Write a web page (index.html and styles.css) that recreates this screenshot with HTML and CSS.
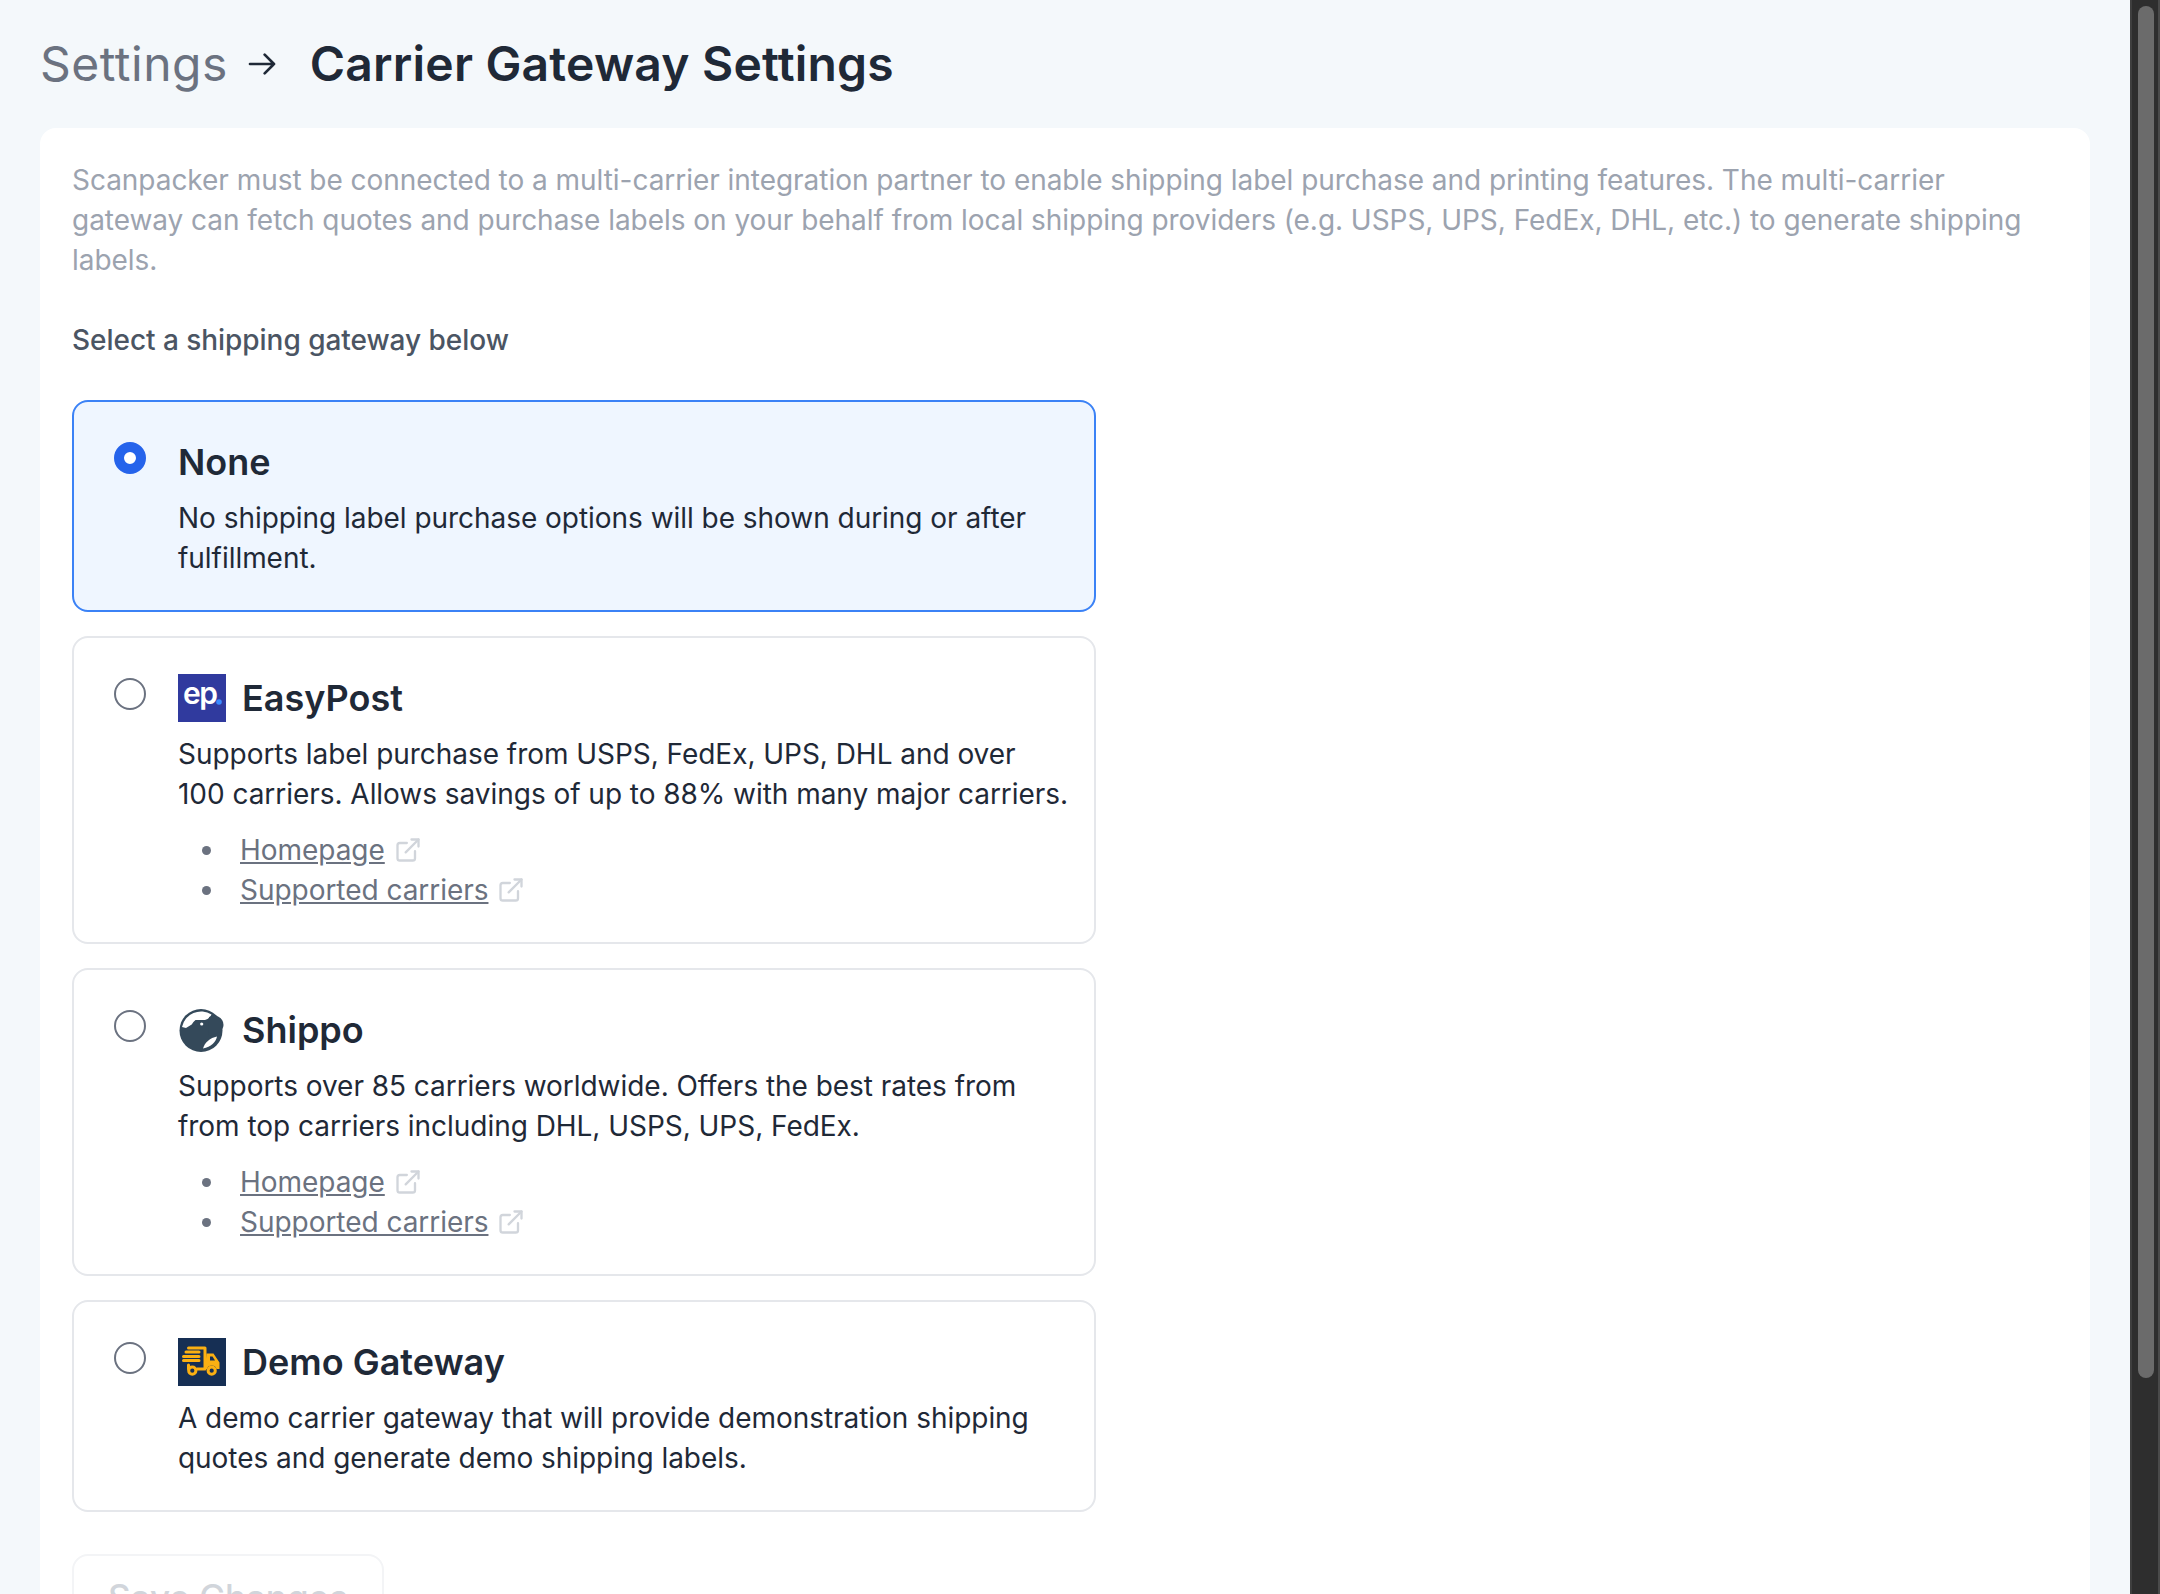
FILE: index.html
```html
<!DOCTYPE html>
<html>
<head>
	<title>Carrier Gateway Settings</title>
	<meta charset="UTF-8">
	<link rel="stylesheet" href="styles.css">
</head>
<body>
	<div class="page">
		<main class="content">
			<h1 class="title">
				<span class="crumb">Settings</span>
				<svg class="arrow" viewBox="0 0 24 24" fill="none" stroke="currentColor" stroke-width="2" stroke-linecap="round" stroke-linejoin="round"><path d="M14 5l7 7m0 0l-7 7m7-7H3"/></svg>
				<span class="current">Carrier Gateway Settings</span>
			</h1>
			<section class="panel">
				<p class="intro">Scanpacker must be connected to a multi-carrier integration partner to enable shipping label purchase and printing features. The multi-carrier gateway can fetch quotes and purchase labels on your behalf from local shipping providers (e.g. USPS, UPS, FedEx, DHL, etc.) to generate shipping labels.</p>
				<p class="select-label">Select a shipping gateway below</p>

				<div class="gateways">
					<div class="gateway selected">
						<span class="radio"></span>
						<div class="gateway-body">
							<h2 class="gateway-name">None</h2>
							<p class="gateway-text">No shipping label purchase options will be shown during or after fulfillment.</p>
						</div>
					</div>

					<div class="gateway">
						<span class="radio"></span>
						<div class="gateway-body">
							<h2 class="gateway-name">
								<svg class="logo" viewBox="0 0 48 48">
									<rect width="48" height="48" fill="#303a9e"/>
									<text x="5" y="30" class="ep-text">ep</text>
									<circle cx="41" cy="28" r="2.800" fill="#3b8bff"/>
								</svg>
								EasyPost
							</h2>
							<p class="gateway-text">Supports label purchase from USPS, FedEx, UPS, DHL and over<br>100 carriers. Allows savings of up to 88% with many major carriers.</p>
							<ul class="links">
								<li><a href="#">Homepage</a><svg class="ext" viewBox="0 0 24 24" fill="none" stroke="currentColor" stroke-width="2" stroke-linecap="round" stroke-linejoin="round"><path d="M18 13v6a2 2 0 0 1-2 2H5a2 2 0 0 1-2-2V8a2 2 0 0 1 2-2h6"/><path d="M15 3h6v6"/><path d="M10 14L21 3"/></svg></li>
								<li><a href="#">Supported carriers</a><svg class="ext" viewBox="0 0 24 24" fill="none" stroke="currentColor" stroke-width="2" stroke-linecap="round" stroke-linejoin="round"><path d="M18 13v6a2 2 0 0 1-2 2H5a2 2 0 0 1-2-2V8a2 2 0 0 1 2-2h6"/><path d="M15 3h6v6"/><path d="M10 14L21 3"/></svg></li>
							</ul>
						</div>
					</div>

					<div class="gateway">
						<span class="radio"></span>
						<div class="gateway-body">
							<h2 class="gateway-name">
								<svg class="logo" viewBox="0 0 48 48">
									<circle cx="23" cy="24.500" r="21.500" fill="#34495a"/>
									<path d="M4 21A19.500 19.500 0 0 1 33.500 8.500L32 11Q29 14 27 14L17.500 14Q15 16 13.700 18.500L8 22Z" fill="#fff"/>
									<path d="M31 11Q36 9 40 10.500Q45.500 13 45.500 19Q45.500 24 40 27L30 30Z" fill="#34495a"/>
									<circle cx="23.700" cy="18" r="1.600" fill="#fff"/>
									<path d="M25 42.500C27 36 32 32 39 30.500C38 36 33 41 25 42.500Z" fill="#fff"/>
								</svg>
								Shippo
							</h2>
							<p class="gateway-text">Supports over 85 carriers worldwide. Offers the best rates from from top carriers including DHL, USPS, UPS, FedEx.</p>
							<ul class="links">
								<li><a href="#">Homepage</a><svg class="ext" viewBox="0 0 24 24" fill="none" stroke="currentColor" stroke-width="2" stroke-linecap="round" stroke-linejoin="round"><path d="M18 13v6a2 2 0 0 1-2 2H5a2 2 0 0 1-2-2V8a2 2 0 0 1 2-2h6"/><path d="M15 3h6v6"/><path d="M10 14L21 3"/></svg></li>
								<li><a href="#">Supported carriers</a><svg class="ext" viewBox="0 0 24 24" fill="none" stroke="currentColor" stroke-width="2" stroke-linecap="round" stroke-linejoin="round"><path d="M18 13v6a2 2 0 0 1-2 2H5a2 2 0 0 1-2-2V8a2 2 0 0 1 2-2h6"/><path d="M15 3h6v6"/><path d="M10 14L21 3"/></svg></li>
							</ul>
						</div>
					</div>

					<div class="gateway">
						<span class="radio"></span>
						<div class="gateway-body">
							<h2 class="gateway-name">
								<svg class="logo" viewBox="0 0 48 48">
									<rect width="48" height="48" fill="#162f54"/>
									<g fill="none" stroke="#fbb012" stroke-width="3" stroke-linecap="round" stroke-linejoin="round">
										<path d="M10.500 10H27V31H19"/>
										<path d="M10.500 27V31"/>
										<path d="M8 14H21M5.500 18.500H21M5.500 22.500H21"/>
										<circle cx="14.300" cy="32.700" r="3.600"/>
										<circle cx="33.700" cy="32.700" r="3.600"/>
									</g>
									<path d="M28.500 15.500H35.500L41.500 24.500V31H38.500A5 5 0 0 0 29 31H27Z" fill="#fbb012"/>
									<path d="M32 18.500H34.500L37 22.500H32Z" fill="#162f54"/>
								</svg>
								Demo Gateway
							</h2>
							<p class="gateway-text">A demo carrier gateway that will provide demonstration shipping quotes and generate demo shipping labels.</p>
						</div>
					</div>
				</div>

				<button class="save" disabled>Save Changes</button>
			</section>
		</main>
		<div class="scrollbar"><div class="thumb"></div></div>
	</div>
</body>
</html>
```

FILE: styles.css
```css
* {
	box-sizing: border-box;
}
html, body {
	margin: 0;
	height: 100%;
	overflow: hidden;
}
body {
	font-family: Inter, "Liberation Sans", sans-serif;
	font-size: 28px;
	line-height: 40px;
	letter-spacing: -0.04px;
	color: #1f2937;
	background: #f4f8fb;
}
.page {
	display: flex;
	height: 1594px;
}
.content {
	flex: 1;
	min-width: 0;
	padding: 0 40px;
	overflow: hidden;
}
.title {
	display: flex;
	align-items: center;
	height: 128px;
	margin: 0;
	font-size: 48px;
	line-height: 64px;
	font-weight: 600;
	letter-spacing: 0.2px;
}
.crumb {
	font-weight: 400;
	letter-spacing: 0.5px;
	color: #6b7280;
}
.arrow {
	width: 32px;
	height: 32px;
	margin: 0 32px 0 18px;
	color: #1f2937;
}
.current {
	color: #1f2937;
}
.panel {
	background: #fff;
	border-radius: 16px;
	padding: 32px;
	min-height: 1466px;
}
.intro {
	margin: 0;
	color: #9ca3af;
}
.select-label {
	margin: 40px 0;
	font-weight: 500;
	color: #4b5563;
}
.gateways {
	display: flex;
	flex-direction: column;
	gap: 24px;
	width: 1024px;
}
.gateway {
	display: flex;
	gap: 32px;
	padding: 36px 21px 32px 40px;
	border: 2px solid #e5e7eb;
	border-radius: 16px;
}
.gateway.selected {
	background: #eff6ff;
	border-color: #3b82f6;
}
.radio {
	flex: none;
	width: 32px;
	height: 32px;
	margin-top: 4px;
	border: 2px solid #6b7280;
	border-radius: 50%;
	background: #fff;
}
.selected .radio {
	border: 10px solid #2563eb;
}
.gateway-body {
	flex: 1;
	min-width: 0;
}
.gateway-name {
	display: flex;
	align-items: center;
	gap: 16px;
	height: 48px;
	margin: 0 0 12px;
	font-size: 36px;
	line-height: 48px;
	font-weight: 600;
	letter-spacing: 0;
	color: #1f2937;
}
.logo {
	flex: none;
	width: 48px;
	height: 48px;
}
.ep-text {
	font-family: Inter, "Liberation Sans", sans-serif;
	font-size: 30px;
	font-weight: 600;
	letter-spacing: -1.5px;
	fill: #fff;
}
.gateway-text {
	margin: 0;
	color: #1f2937;
}
.links {
	margin: 16px 0 0;
	padding-left: 24px;
	list-style: none;
	color: #6b7280;
}
.links li {
	display: flex;
	align-items: center;
}
.links li::before {
	content: "";
	flex: none;
	width: 9px;
	height: 9px;
	margin-right: 29px;
	border-radius: 50%;
	background: #6b7280;
}
.links a {
	color: #6b7280;
	text-decoration: underline;
}
.ext {
	flex: none;
	width: 28px;
	height: 28px;
	margin-left: 9px;
	color: #d1d5db;
}
.save {
	display: block;
	margin-top: 42px;
	width: 312px;
	padding: 21px 0;
	font-family: inherit;
	font-size: 35px;
	line-height: 40px;
	font-weight: 500;
	color: #d1d5db;
	background: #fff;
	border: 2px solid #f3f4f6;
	border-radius: 16px;
}
.scrollbar {
	flex: none;
	width: 30px;
	padding: 6px 4px 0 6px;
	background: #2e2e2e;
	border-left: 2px solid #3f3f3f;
	border-right: 2px solid #4a4a4a;
}
.thumb {
	width: 16px;
	height: 1372px;
	border-radius: 8px;
	background: #6b6b6b;
}
```
